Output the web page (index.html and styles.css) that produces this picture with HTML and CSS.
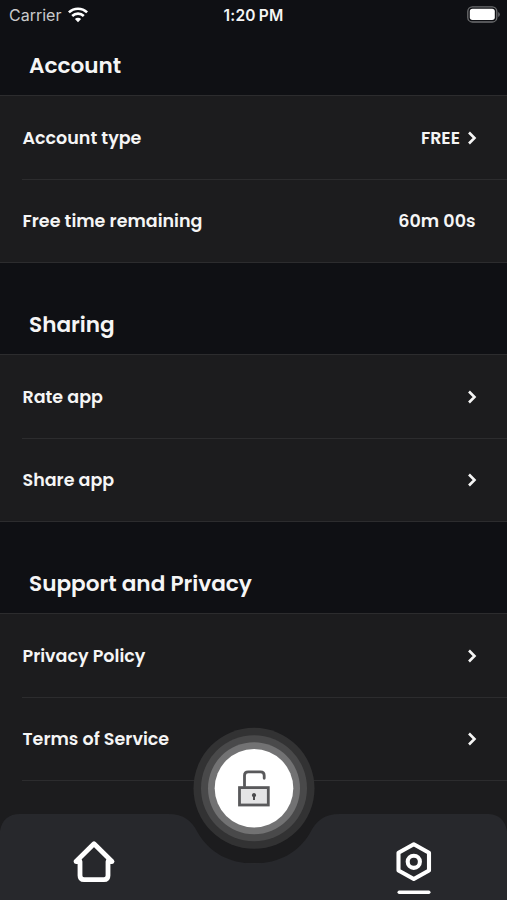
FILE: index.html
```html
<!DOCTYPE html>
<html lang="en">
<head>
<meta charset="utf-8">
<title>Settings</title>
<link rel="stylesheet" href="styles.css">
</head>
<body>
<div class="screen">
  <header class="status">
    <div class="carrier"><span>Carrier</span>
      <svg width="20" height="16" viewBox="0 0 20 16" fill="none" stroke="#fff" stroke-width="2.6"><path d="M.9 5.4a13 13 0 0 1 18.2 0"/><path d="M4.2 9a8.3 8.3 0 0 1 11.6 0"/><path d="M10 15.2 6.9 12.1a4.4 4.4 0 0 1 6.2 0Z" fill="#fff" stroke="none"/></svg>
    </div>
    <time class="clock">1:20 PM</time>
    <svg class="battery" width="33" height="17" viewBox="0 0 33 17"><rect x=".8" y=".8" width="29" height="15.2" rx="4.6" fill="none" stroke="#6d6e70" stroke-width="1.3"/><rect x="2.8" y="2.8" width="25" height="11.2" rx="2.7" fill="#fff"/><path d="M31.3 6v5q1.4-.8 1.4-2.5T31.3 6Z" fill="#77787a"/></svg>
  </header>
  <main>
    <h2 class="title first">Account</h2>
    <ul class="list">
      <li class="row"><span>Account type</span><span class="value"><span>FREE</span><svg class="chevron" viewBox="0 0 10 16"><path d="m2 2.5 5.5 5.5L2 13.5"/></svg></span></li>
      <li class="row"><span>Free time remaining</span><span class="value time">60m 00s</span></li>
    </ul>
    <h2 class="title">Sharing</h2>
    <ul class="list">
      <li class="row"><span>Rate app</span><svg class="chevron" viewBox="0 0 10 16"><path d="m2 2.5 5.5 5.5L2 13.5"/></svg></li>
      <li class="row"><span>Share app</span><svg class="chevron" viewBox="0 0 10 16"><path d="m2 2.5 5.5 5.5L2 13.5"/></svg></li>
    </ul>
    <h2 class="title">Support and Privacy</h2>
    <ul class="list">
      <li class="row"><span>Privacy Policy</span><svg class="chevron" viewBox="0 0 10 16"><path d="m2 2.5 5.5 5.5L2 13.5"/></svg></li>
      <li class="row"><span>Terms of Service</span><svg class="chevron" viewBox="0 0 10 16"><path d="m2 2.5 5.5 5.5L2 13.5"/></svg></li>
      <li class="row"></li>
    </ul>
  </main>
  <nav class="tabs">
    <svg width="507" height="180" viewBox="0 720 507 180">
      <path fill="#27282c" d="M0 831Q3 814 20 814H168C184 814 192 821 198 833C209 852 229 863.5 254 863.5S299 852 310 833C316 821 324 814 340 814H489Q504 815 507 831V900H0Z"/>
      <circle cx="254" cy="788.3" r="60.5" fill="#323233"/>
      <circle cx="254" cy="788.3" r="53" fill="#49494a"/>
      <circle cx="254" cy="788.3" r="46" fill="#727273"/>
      <circle cx="254" cy="788.3" r="39.3" fill="#fff"/>
      <g fill="none" stroke="#59595b" stroke-width="2.8">
        <rect x="239.5" y="787.6" width="28.8" height="17.4" fill="#e4e4e5"/>
        <path stroke-linecap="round" d="M244.5 786V775.5Q244.5 771.8 248.2 771.8H260.5Q264.2 771.8 264.2 775.5V778.3"/>
      </g>
      <path fill="#4b4b4d" d="M254 793a2.2 2.2 0 0 0-1 4.1v3h2v-3a2.2 2.2 0 0 0-1-4.1Z"/>
      <path fill="none" stroke="#fff" stroke-width="4.8" stroke-linejoin="round" stroke-linecap="round" d="M80 861.5H76L94 843.8 112 861.5H108V875.5Q108 879.7 104 879.7H84Q80 879.7 80 875.5Z"/>
      <g fill="none" stroke="#fff" stroke-width="4.1" stroke-linejoin="round">
        <path d="M413.8 844.3 429 852.7V870.5L413.8 879 398.5 870.5V852.7Z"/>
        <circle cx="413.8" cy="861.8" r="6.1"/>
      </g>
      <rect x="397.5" y="890.5" width="33" height="3.4" rx="1.7" fill="#fff"/>
    </svg>
  </nav>
</div>
</body>
</html>
```
FILE: styles.css
```css
* { box-sizing: border-box; }
body { margin: 0; background: #0f1014; color: #f5f5f5; font-family: Poppins, Inter, sans-serif; }
.screen { position: relative; width: 507px; height: 900px; overflow: hidden; }
.status { display: grid; grid-template-columns: 1fr auto 1fr; align-items: center; height: 28px; padding: 0 7px 0 9px; font-family: Inter, sans-serif; }
.carrier { display: flex; align-items: center; gap: 7px; font-size: 16px; color: #c9cacc; padding-top: 1px; }
.clock { font-size: 15.5px; font-weight: 600; padding: 2px 2px 0 0; word-spacing: -1px; letter-spacing: .2px; }
.battery { justify-self: end; }
.title { margin: 0; height: 91px; padding: 32px 0 0 29px; font-size: 21.6px; line-height: 60px; font-weight: 600; }
.title.first { height: 67px; padding-top: 8px; }
.list { margin: 0; padding: 0; list-style: none; background: #1c1c1e; border: solid #2c2c2e; border-width: 1px 0; }
.row { display: flex; justify-content: space-between; align-items: center; height: 83px; margin-left: 22px; padding: 0 30px 0 .5px; font-size: 17.5px; font-weight: 600; }
.row + .row { height: 84px; border-top: 1px solid #2c2c2e; }
.row + .row:nth-child(2):not(:last-child) { height: 83px; padding-bottom: 1px; }
.row:last-child { height: 83px; }
.value { display: flex; align-items: center; gap: 7px; }
.time { margin-right: 1.5px; }
.chevron { width: 10px; height: 16px; fill: none; stroke: #f5f5f5; stroke-width: 2.6; }
.tabs { position: absolute; left: 0; bottom: 0; height: 180px; }
.tabs svg { display: block; }
```
